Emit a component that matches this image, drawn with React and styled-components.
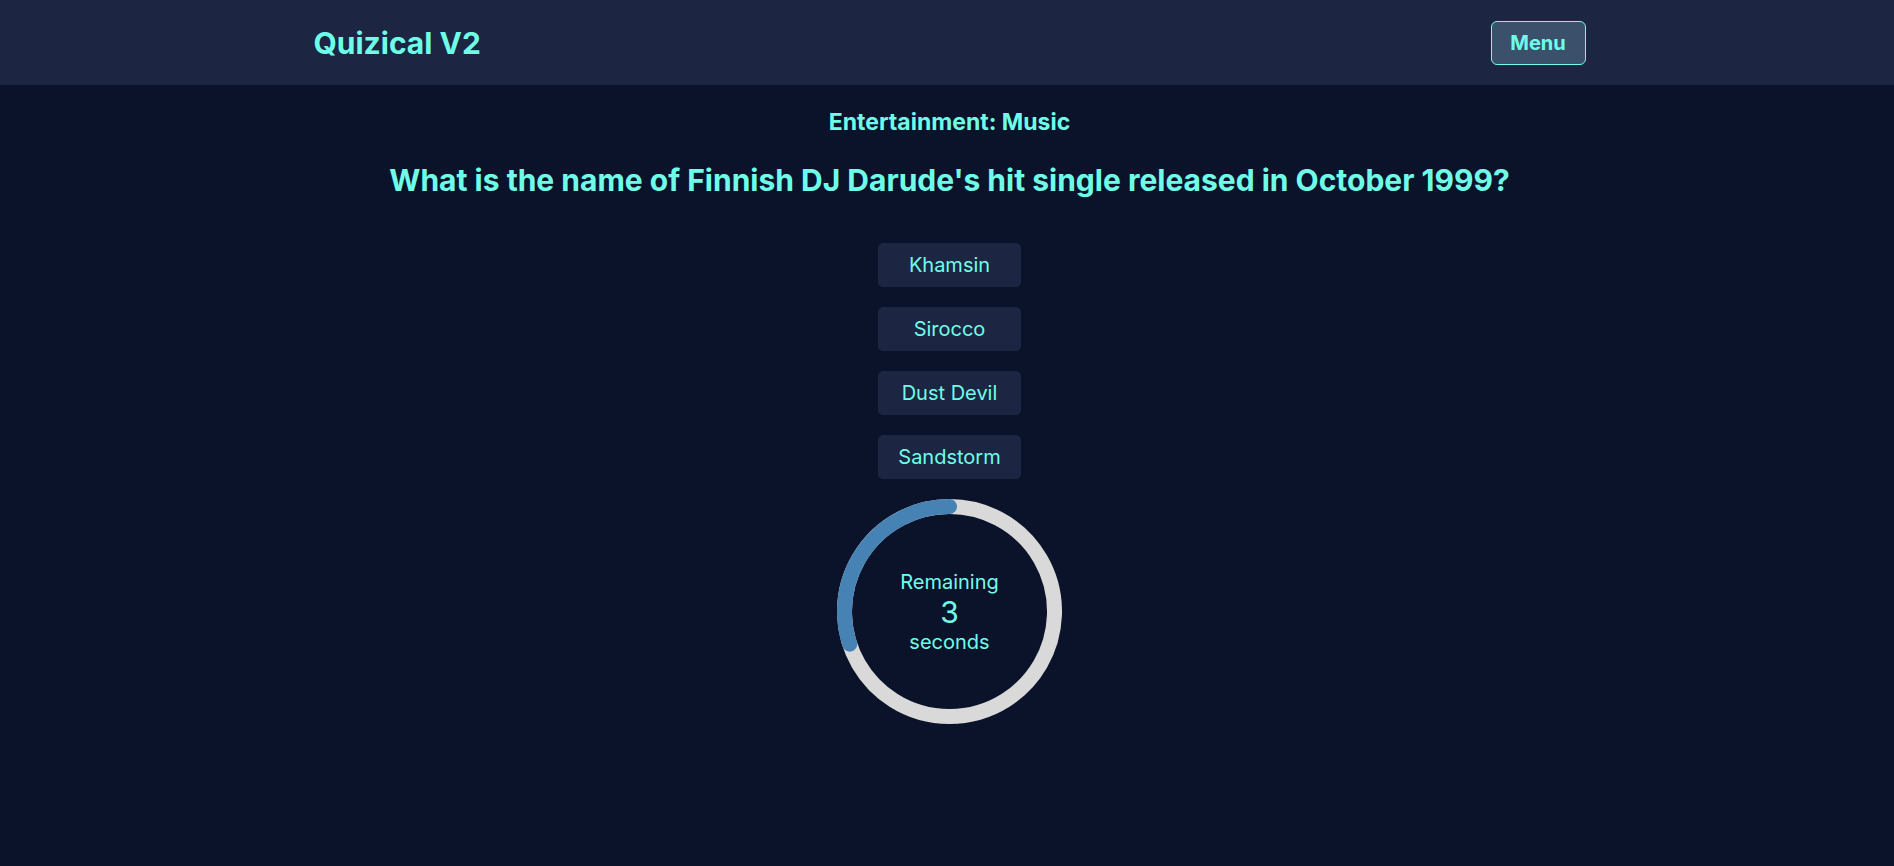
import React from "react";
import styled, { createGlobalStyle } from "styled-components";

const GlobalStyle = createGlobalStyle`
  * { box-sizing: border-box; }
  body {
    margin: 0;
    background: #0b132b;
    font-family: Inter, "Noto Sans", sans-serif;
    color: #6fffe9;
  }
`;

const Page = styled.div`
  padding-left: 5px;
`;

const Header = styled.header`
  height: 85px;
  margin-left: -5px;
  padding-left: 5px;
  background: #1c2541;
  display: flex;
  justify-content: center;
`;

const HeaderInner = styled.div`
  width: 1272px;
  display: flex;
  align-items: center;
  justify-content: space-between;
`;

const Logo = styled.h1`
  margin: 0;
  font-size: 30px;
  font-weight: 700;
  color: #6fffe9;
`;

const MenuButton = styled.button`
  width: 95px;
  height: 44px;
  background: #3a506b;
  border: 1px solid #6fffe9;
  border-radius: 6px;
  color: #6fffe9;
  font-family: Inter, sans-serif;
  font-size: 20px;
  font-weight: 700;
  cursor: pointer;
`;

const Main = styled.main`
  display: flex;
  flex-direction: column;
  align-items: center;
  padding-top: 22px;
`;

const Category = styled.h3`
  margin: 0;
  font-size: 23px;
  line-height: 30px;
  font-weight: 700;
`;

const Question = styled.h2`
  margin: 25px 0 0;
  font-size: 30px;
  line-height: 36px;
  font-weight: 700;
`;

const Answers = styled.div`
  margin-top: 45px;
  display: flex;
  flex-direction: column;
  gap: 20px;
`;

const Answer = styled.button`
  width: 143px;
  height: 44px;
  border: none;
  border-radius: 5px;
  background: #1c2541;
  color: #6fffe9;
  font-family: Inter, sans-serif;
  font-size: 20px;
  cursor: pointer;
`;

const Timer = styled.div`
  margin-top: 20px;
  width: 225px;
  height: 225px;
  position: relative;
`;

const TimerText = styled.div`
  position: absolute;
  inset: 0;
  display: flex;
  flex-direction: column;
  align-items: center;
  justify-content: center;
  font-size: 20px;
  line-height: 24px;
`;

const Seconds = styled.div`
  font-size: 30px;
  line-height: 36px;
`;

const answers = ["Khamsin", "Sirocco", "Dust Devil", "Sandstorm"];

function CountdownRing({ remaining, total }) {
  const size = 225;
  const stroke = 15;
  const r = (size - stroke) / 2;
  const c = 2 * Math.PI * r;
  const frac = remaining / total;
  const d = `M ${size / 2} ${stroke / 2} a ${r} ${r} 0 1 0 0.01 0`;
  return (
    <svg width={size} height={size}>
      <path d={d} fill="none" stroke="#d9d9d9" strokeWidth={stroke} />
      <path
        d={d}
        fill="none"
        stroke="#4682b4"
        strokeWidth={stroke}
        strokeLinecap="round"
        strokeDasharray={c}
        strokeDashoffset={c * (1 - frac)}
      />
    </svg>
  );
}

export default function App() {
  return (
    <Page>
      <GlobalStyle />
      <Header>
        <HeaderInner>
          <Logo>Quizical V2</Logo>
          <MenuButton>Menu</MenuButton>
        </HeaderInner>
      </Header>
      <Main>
        <Category>Entertainment: Music</Category>
        <Question>What is the name of Finnish DJ Darude's hit single released in October 1999?</Question>
        <Answers>
          {answers.map((a) => (
            <Answer key={a}>{a}</Answer>
          ))}
        </Answers>
        <Timer>
          <CountdownRing remaining={3} total={10} />
          <TimerText>
            <div>Remaining</div>
            <Seconds>3</Seconds>
            <div>seconds</div>
          </TimerText>
        </Timer>
      </Main>
    </Page>
  );
}
